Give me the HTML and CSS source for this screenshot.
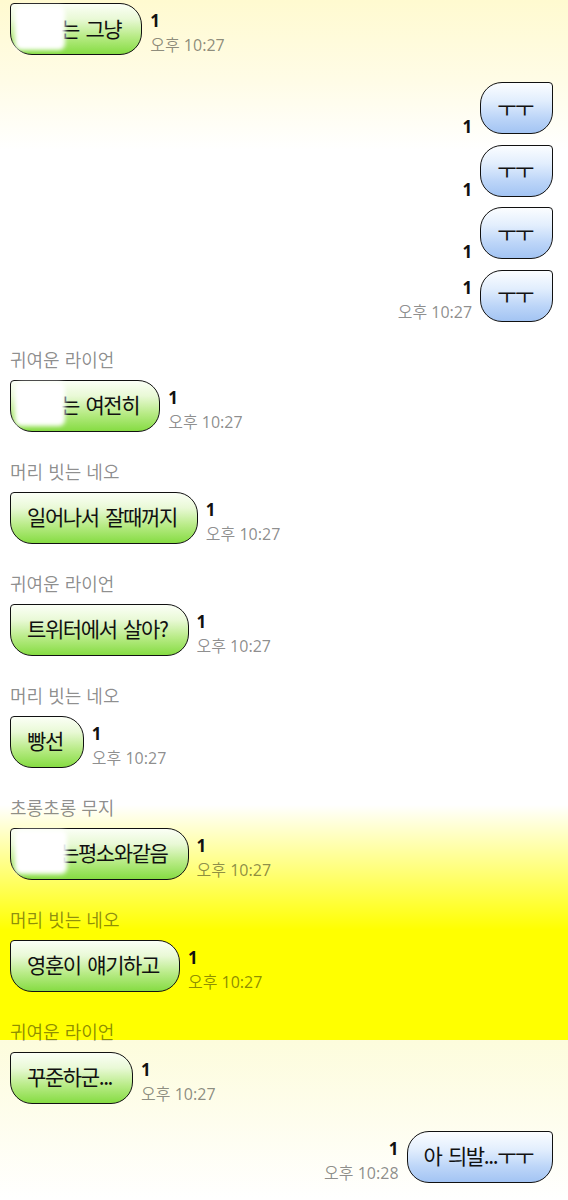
FILE: index.html
```html
<!DOCTYPE html>
<html lang="ko">
<head>
  <meta charset="UTF-8">
  <title>채팅</title>
  <link rel="stylesheet" href="styles.css">
</head>
<body>

  <div class="chat">

    <div class="row in">
      <div class="bubble"><span class="censor"></span>는 그냥</div>
      <div class="meta"><span class="unread">1</span><span class="time">오후 10:27</span></div>
    </div>

    <div class="row out tight">
      <div class="meta"><span class="unread">1</span></div>
      <div class="bubble">ㅜㅜ</div>
    </div>
    <div class="row out tight">
      <div class="meta"><span class="unread">1</span></div>
      <div class="bubble">ㅜㅜ</div>
    </div>
    <div class="row out tight">
      <div class="meta"><span class="unread">1</span></div>
      <div class="bubble">ㅜㅜ</div>
    </div>
    <div class="row out last">
      <div class="meta"><span class="unread">1</span><span class="time">오후 10:27</span></div>
      <div class="bubble">ㅜㅜ</div>
    </div>

    <div class="name">귀여운 라이언</div>
    <div class="row in">
      <div class="bubble"><span class="censor"></span>는 여전히</div>
      <div class="meta"><span class="unread">1</span><span class="time">오후 10:27</span></div>
    </div>

    <div class="name">머리 빗는 네오</div>
    <div class="row in">
      <div class="bubble">일어나서 잘때꺼지</div>
      <div class="meta"><span class="unread">1</span><span class="time">오후 10:27</span></div>
    </div>

    <div class="name">귀여운 라이언</div>
    <div class="row in">
      <div class="bubble">트위터에서 살아?</div>
      <div class="meta"><span class="unread">1</span><span class="time">오후 10:27</span></div>
    </div>

    <div class="name">머리 빗는 네오</div>
    <div class="row in">
      <div class="bubble">빵선</div>
      <div class="meta"><span class="unread">1</span><span class="time">오후 10:27</span></div>
    </div>

    <div class="name">초롱초롱 무지</div>
    <div class="row in">
      <div class="bubble"><span class="censor wide"></span>는평소와같음</div>
      <div class="meta"><span class="unread">1</span><span class="time">오후 10:27</span></div>
    </div>

    <div class="name">머리 빗는 네오</div>
    <div class="row in">
      <div class="bubble">영훈이 얘기하고</div>
      <div class="meta"><span class="unread">1</span><span class="time">오후 10:27</span></div>
    </div>

    <div class="name">귀여운 라이언</div>
    <div class="row in">
      <div class="bubble">꾸준하군...</div>
      <div class="meta"><span class="unread">1</span><span class="time">오후 10:27</span></div>
    </div>

    <div class="row out">
      <div class="meta"><span class="unread">1</span><span class="time">오후 10:28</span></div>
      <div class="bubble">아 듸발...ㅜㅜ</div>
    </div>

  </div>

</body>
</html>
```

FILE: styles.css
```css
body {
  margin: 0;
  font-family: "Noto Sans", "Noto Sans CJK KR", sans-serif;
  color: #111;
}

.chat {
  min-height: 1200px;
  box-sizing: border-box;
  padding: 3px 15px 0 10px;
  background: linear-gradient(to bottom,
    #fffad0 0px,
    #fffce6 80px,
    #ffffff 150px,
    #ffffff 805px,
    #ffff00 930px,
    #ffff00 1040px,
    #fdfcdc 1040px,
    #ffffff 1200px);
}

.name {
  font-family: "Noto Sans CJK KR", sans-serif;
  font-size: 18px;
  line-height: 24px;
  color: rgba(0, 0, 0, 0.45);
  margin-bottom: 9px;
}

.row {
  display: flex;
  align-items: flex-end;
  gap: 8px;
  margin-bottom: 27px;
}

.row.out {
  justify-content: flex-end;
}

.row.tight {
  margin-bottom: 10.5px;
}

.row.last {
  margin-bottom: 25px;
}

.bubble {
  height: 52px;
  box-sizing: border-box;
  display: flex;
  align-items: center;
  padding: 0 20px 3px 16px;
  border: 1.5px solid #111;
  border-radius: 4px 22px 22px 22px;
  font-family: "Noto Sans CJK KR", sans-serif;
  font-size: 21px;
  letter-spacing: -1.4px;
  word-spacing: 2px;
  white-space: pre;
  background: linear-gradient(to bottom, #fbfff6 0%, #e9f9d6 30%, #b8eb86 65%, #86dc43 100%);
}

.out .bubble {
  padding: 0 19px 3px 16px;
  border-radius: 22px 4px 22px 22px;
  background: linear-gradient(to bottom, #fbfdff 0%, #e2eefd 35%, #bcd5f8 70%, #a3c4f3 100%);
}

/* blurred patch hiding a name */
.censor {
  position: relative;
  z-index: 1;
  display: inline-block;
  width: 50px;
  height: 44px;
  margin: 0 -4px 0 -12px;
  background: #fff;
  border-radius: 6px;
  filter: blur(2px);
}

.censor.wide {
  width: 52px;
  margin-right: -7px;
}

.meta {
  display: flex;
  flex-direction: column;
  align-items: flex-start;
}

.out .meta {
  align-items: flex-end;
}

.unread {
  font-size: 17px;
  font-weight: bold;
  line-height: 20px;
  margin-bottom: 4px;
  color: #111;
}

.unread:only-child {
  margin-bottom: -3px;
}

.time {
  font-size: 16px;
  line-height: 20px;
  color: rgba(0, 0, 0, 0.45);
  white-space: nowrap;
}
```
